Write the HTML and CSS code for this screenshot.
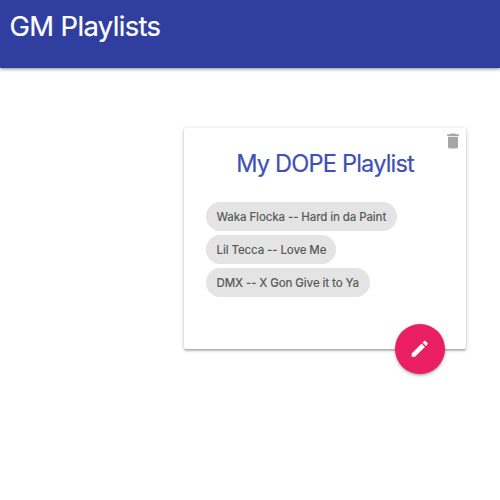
FILE: index.html
```html
<!DOCTYPE html>
<html lang="en">
<head>
<meta charset="utf-8">
<title>GM Playlists</title>
<link rel="stylesheet" href="styles.css">
</head>
<body>
<nav class="navbar"><span class="brand">GM Playlists</span></nav>
<main>
  <section class="card">
    <svg class="trash" viewBox="0 0 24 24"><path d="M6 19c0 1.1.9 2 2 2h8c1.1 0 2-.9 2-2V7H6v12zM19 4h-3.500l-1-1h-5l-1 1H5v2h14V4z"/></svg>
    <h1 class="title"><span>My DOPE Playlist</span></h1>
    <div class="songs">
      <div class="chip chip-waka"><span>Waka Flocka -- Hard in da Paint</span></div>
      <div class="chip chip-tecca"><span>Lil Tecca -- Love Me</span></div>
      <div class="chip chip-dmx"><span>DMX -- X Gon Give it to Ya</span></div>
    </div>
    <button class="fab" aria-label="Edit"><svg viewBox="0 0 24 24"><path d="M3 17.250V21h3.750L17.810 9.940l-3.750-3.750L3 17.250zM20.710 7.040c.39-.39.39-1.020 0-1.410l-2.340-2.340c-.39-.39-1.020-.39-1.410 0l-1.830 1.830 3.750 3.750 1.830-1.830z"/></svg></button>
  </section>
</main>
</body>
</html>
```
FILE: styles.css
```css
* { box-sizing: border-box; }
body {
  margin: 0;
  height: 500px;
  overflow: hidden;
  background: #fff;
  font-family: Inter, sans-serif;
}
.navbar {
  height: 67.500px;
  padding: 10px 0 0 9.500px;
  background: #303f9f;
  color: #fff;
  box-shadow: 0 1.800px 2px 0 rgba(0,0,0,.14), 0 2.500px 1px -1.800px rgba(0,0,0,.12), 0 1px 4px 0 rgba(0,0,0,.2);
}
.brand {
  display: block;
  font-size: 27.400px;
  line-height: 33px;
  letter-spacing: -0.620px;
  white-space: nowrap;
  -webkit-text-stroke: 0.200px currentColor;
}
main { padding: 60px 0 0 184.250px; }
.card {
  position: relative;
  width: 281.750px;
  height: 221.500px;
  padding: 20px 21.500px;
  border-radius: 2px;
  background: #fff;
  box-shadow: 0 1.800px 2px 0 rgba(0,0,0,.14), 0 2.500px 1px -1.800px rgba(0,0,0,.12), 0 1px 4px 0 rgba(0,0,0,.2);
}
.trash {
  position: absolute;
  top: 3px;
  right: 3px;
  width: 20px;
  height: 20px;
  fill: #a6a6a6;
}
.title {
  margin: 0 0 23.500px;
  color: #3f51b5;
  font-size: 23.600px;
  font-weight: 400;
  line-height: 31px;
  letter-spacing: -0.820px;
  text-align: center;
  white-space: nowrap;
  -webkit-text-stroke: 0.200px currentColor;
}
.songs {
  display: flex;
  flex-direction: column;
  align-items: flex-start;
  gap: 4.500px;
}
.chip {
  height: 28.500px;
  padding: 0 10.750px;
  border-radius: 14.250px;
  background: #e4e4e4;
  color: rgba(0,0,0,.6);
  font-size: 11.500px;
  font-weight: 500;
  line-height: 30.500px;
  letter-spacing: -0.110px;
  white-space: nowrap;
  -webkit-text-stroke: 0.150px currentColor;
}
.chip-waka { width: 191px; }
.chip-tecca { width: 130.500px; }
.chip-dmx { width: 164.500px; }
.fab {
  position: absolute;
  right: 21px;
  bottom: -25px;
  display: flex;
  align-items: center;
  justify-content: center;
  width: 50px;
  height: 50px;
  padding: 0;
  border: 0;
  border-radius: 50%;
  background: #e91e63;
  box-shadow: 0 1.800px 2px 0 rgba(0,0,0,.14), 0 2.500px 1px -1.800px rgba(0,0,0,.12), 0 1px 4px 0 rgba(0,0,0,.2);
}
.fab svg {
  width: 21.500px;
  height: 21.500px;
  fill: #fff;
}
```
